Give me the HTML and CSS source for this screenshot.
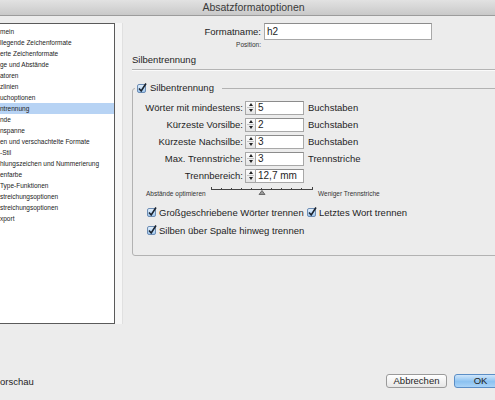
FILE: index.html
```html
<!DOCTYPE html>
<html lang="de">
<head>
  <meta charset="UTF-8">
  <title>Absatzformatoptionen</title>
  <link rel="stylesheet" href="styles.css">
</head>
<body>
  <div class="titlebar">Absatzformatoptionen</div>

  <div class="main">
    <!-- the window is cut off on the left, only the ends of the names show -->
    <ul class="category-list">
      <li>mein</li>
      <li>llegende Zeichenformate</li>
      <li>erte Zeichenformate</li>
      <li>ge und Abstände</li>
      <li>atoren</li>
      <li>zlinien</li>
      <li>uchoptionen</li>
      <li class="selected">ntrennung</li>
      <li>nde</li>
      <li>nspanne</li>
      <li>en und verschachtelte Formate</li>
      <li>-Stil</li>
      <li>hlungszeichen und Nummerierung</li>
      <li>enfarbe</li>
      <li>Type-Funktionen</li>
      <li>streichungsoptionen</li>
      <li>streichungsoptionen</li>
      <li>xport</li>
    </ul>
    <div class="splitter"></div>

    <div class="content">
      <div class="name-row">
        <label class="name-label">Formatname:</label>
        <div class="text-input name-input">h2</div>
      </div>
      <div class="pos-row"><span class="name-label">Position:</span></div>

      <div class="section-title">Silbentrennung</div>

      <fieldset class="group">
        <legend>
          <svg class="checkbox" viewBox="0 0 10 10" width="10" height="10">
            <defs>
              <linearGradient id="cb" x1="0" y1="0" x2="0" y2="1">
                <stop offset="0" stop-color="#e6f1fc"/>
                <stop offset="1" stop-color="#9cc6ee"/>
              </linearGradient>
            </defs>
            <rect x="0.5" y="1.5" width="8" height="8" rx="1.5" fill="url(#cb)" stroke="#6d8db4"/>
            <path d="M2 5.5 L4.2 8 L9 0.5" fill="none" stroke="#1b2430" stroke-width="1.6"/>
          </svg>
          <span>Silbentrennung</span>
        </legend>

        <div class="field-row">
          <span class="field-label">Wörter mit mindestens:</span>
          <span class="stepper"><i class="up"></i><i class="down"></i></span>
          <span class="text-input num-input">5</span>
          <span class="unit">Buchstaben</span>
        </div>
        <div class="field-row">
          <span class="field-label">Kürzeste Vorsilbe:</span>
          <span class="stepper"><i class="up"></i><i class="down"></i></span>
          <span class="text-input num-input">2</span>
          <span class="unit">Buchstaben</span>
        </div>
        <div class="field-row">
          <span class="field-label">Kürzeste Nachsilbe:</span>
          <span class="stepper"><i class="up"></i><i class="down"></i></span>
          <span class="text-input num-input">3</span>
          <span class="unit">Buchstaben</span>
        </div>
        <div class="field-row">
          <span class="field-label">Max. Trennstriche:</span>
          <span class="stepper"><i class="up"></i><i class="down"></i></span>
          <span class="text-input num-input">3</span>
          <span class="unit">Trennstriche</span>
        </div>
        <div class="field-row">
          <span class="field-label">Trennbereich:</span>
          <span class="stepper"><i class="up"></i><i class="down"></i></span>
          <span class="text-input num-input">12,7 mm</span>
        </div>

        <div class="slider-row">
          <span class="slider-label left">Abstände optimieren</span>
          <svg class="slider" viewBox="0 0 102 12" width="102" height="12">
            <path d="M0.5 5.5 H101.5" stroke="#444" stroke-width="1"/>
            <path d="M0.5 3 V6 M10.5 4 V6 M20.5 4 V6 M30.5 4 V6 M40.5 4 V6 M50.5 4 V6 M60.5 4 V6 M70.5 4 V6 M80.5 4 V6 M90.5 4 V6 M101.5 3 V6" stroke="#444" stroke-width="1"/>
            <path d="M51 6.5 L54 10.5 H48 Z" fill="#9a9a9a" stroke="#555" stroke-width="0.8"/>
          </svg>
          <span class="slider-label">Weniger Trennstriche</span>
        </div>

        <div class="check-row">
          <span class="check first">
            <svg class="checkbox" viewBox="0 0 10 10" width="10" height="10">
              <rect x="0.5" y="1.5" width="8" height="8" rx="1.5" fill="url(#cb)" stroke="#6d8db4"/>
              <path d="M2 5.5 L4.2 8 L9 0.5" fill="none" stroke="#1b2430" stroke-width="1.6"/>
            </svg>
            Großgeschriebene Wörter trennen
          </span>
          <span class="check">
            <svg class="checkbox" viewBox="0 0 10 10" width="10" height="10">
              <rect x="0.5" y="1.5" width="8" height="8" rx="1.5" fill="url(#cb)" stroke="#6d8db4"/>
              <path d="M2 5.5 L4.2 8 L9 0.5" fill="none" stroke="#1b2430" stroke-width="1.6"/>
            </svg>
            Letztes Wort trennen
          </span>
        </div>
        <div class="check-row">
          <span class="check first">
            <svg class="checkbox" viewBox="0 0 10 10" width="10" height="10">
              <rect x="0.5" y="1.5" width="8" height="8" rx="1.5" fill="url(#cb)" stroke="#6d8db4"/>
              <path d="M2 5.5 L4.2 8 L9 0.5" fill="none" stroke="#1b2430" stroke-width="1.6"/>
            </svg>
            Silben über Spalte hinweg trennen
          </span>
        </div>
      </fieldset>
    </div>
  </div>

  <div class="footer">
    <span class="preview">orschau</span>
    <div class="buttons">
      <button class="btn">Abbrechen</button>
      <button class="btn default">OK</button>
    </div>
  </div>
</body>
</html>
```

FILE: styles.css
```css
body {
  margin: 0;
  width: 495px;
  height: 400px;
  overflow: hidden;
  background-color: #ececec; /* mac dialog grey */
  font-family: "Liberation Sans", Arial, sans-serif;
  font-size: 9.5px;
  color: #1e1e1e;
}

.titlebar {
  height: 15px;
  line-height: 15px;
  padding-left: 12px;
  text-align: center;
  font-size: 10.5px;
  color: #3a3a3a;
  background: linear-gradient(#e2e2e2, #c9c9c9);
  border-bottom: 1px solid #9c9c9c;
}

.main {
  display: flex;
  margin-top: 7px;
  height: 301px;
}

.category-list {
  list-style: none;
  margin: 0;
  padding: 2px 0 0 0;
  width: 115px;
  flex: none;
  box-sizing: border-box;
  height: 301px;
  overflow: hidden;
  background-color: #fff;
  border: 1px solid #5a5a5a;
  border-left: none;
  font-size: 6.5px;
  color: #222;
}

.category-list li {
  height: 11px;
  line-height: 11px;
  white-space: nowrap;
}

.category-list li.selected {
  background-color: #b7d3f4;
}

.splitter {
  width: 7px;
  flex: none;
  background-color: #f6f6f6;
  border-right: 1px solid #e0e0e0;
}

.content {
  flex: none;
  width: 380px;
  margin-left: 9px;
  display: flex;
  flex-direction: column;
}

.name-row {
  display: flex;
  align-items: center;
  height: 17px;
}

.name-label {
  width: 129px;
  text-align: right;
  flex: none;
}

.text-input {
  box-sizing: border-box;
  background-color: #fff;
  border: 1px solid #a8a8a8;
  border-top-color: #8c8c8c;
  font-size: 10px;
  white-space: nowrap;
}

.name-input {
  margin-left: 3px;
  width: 168px;
  height: 17px;
  line-height: 15px;
  padding-left: 2px;
}

.pos-row {
  display: flex;
  height: 10px;
  line-height: 10px;
  font-size: 6.5px;
  color: #333;
}

.section-title {
  padding: 4px 0 3px;
  line-height: 12px;
  border-bottom: 1px solid #b4b4b4;
  box-shadow: 0 1px 0 #fafafa;
}

.group {
  margin: 12px 0 0 0;
  padding: 5px 0 16px 0;
  min-width: 0;
  border: 1px solid #b2b2b2;
  border-radius: 3px;
}

.group legend {
  display: flex;
  align-items: center;
  gap: 3px;
  margin-left: 2px;
  padding: 0 8px 0 2px;
  height: 12px;
  line-height: 12px;
}

.checkbox {
  display: block;
  flex: none;
}

.field-row {
  display: flex;
  align-items: center;
  height: 17px;
}

.field-label {
  width: 112px;
  padding-right: 2px;
  box-sizing: border-box;
  text-align: right;
  flex: none;
}

.stepper {
  display: flex;
  flex-direction: column;
  justify-content: center;
  gap: 3px;
  box-sizing: border-box;
  width: 11px;
  height: 14px;
  border: 1px solid #a8a8a8;
  background: linear-gradient(#fdfdfd, #e4e4e4);
  position: relative;
}

.stepper::after {
  content: '';
  position: absolute;
  left: 1px;
  right: 1px;
  top: 5px;
  border-top: 1px solid #c4c4c4;
}

.stepper i {
  display: block;
  margin: 0 auto;
  width: 0;
  height: 0;
  border-left: 2.5px solid transparent;
  border-right: 2.5px solid transparent;
}

.stepper .up {
  border-bottom: 3px solid #222;
}

.stepper .down {
  border-top: 3px solid #222;
}

.num-input {
  width: 48px;
  height: 14px;
  line-height: 12px;
  padding-left: 2px;
  border-left: none;
}

.unit {
  margin-left: 4px;
}

.slider-row {
  display: flex;
  align-items: flex-start;
  height: 15px;
}

.slider-label {
  font-size: 6.5px;
  line-height: 8px;
  margin-top: 6px;
  color: #333;
  white-space: nowrap;
  margin-left: 5px;
}

.slider-label.left {
  width: 65px;
  margin-left: 13px;
}

.slider {
  display: block;
  flex: none;
}

.check-row {
  display: flex;
  align-items: center;
  height: 18px;
}

.slider-row + .check-row {
  margin-top: 4px;
}

.check {
  display: flex;
  align-items: center;
  gap: 2px;
  white-space: nowrap;
}

.check.first {
  width: 160px;
  margin-left: 14px;
  flex: none;
}

.footer {
  display: flex;
  align-items: center;
  margin-top: 50px;
  height: 14px;
}

.preview {
  flex: 1;
}

.buttons {
  display: flex;
  gap: 7px;
  margin-right: -12px;
}

.btn {
  box-sizing: border-box;
  height: 14px;
  padding: 0;
  font-family: "Liberation Sans", Arial, sans-serif;
  font-size: 9.5px;
  color: #1e1e1e;
  line-height: 12px;
  border: 1px solid #9a9a9a;
  border-radius: 3px;
  background: linear-gradient(#ffffff, #e6e6e6);
  width: 61px;
}

.btn.default {
  width: 53px;
  border-color: #5b8ec6;
  background: linear-gradient(#cfe6fb, #8cc2f1 55%, #a9d3f7);
}
```
